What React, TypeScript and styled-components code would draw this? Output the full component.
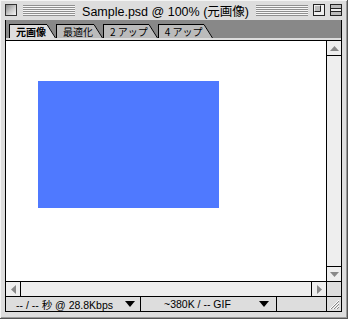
import styled, { createGlobalStyle } from "styled-components"

const GlobalStyle = createGlobalStyle`
  html, body { margin: 0; padding: 0; background: #ffffff; }
  * { box-sizing: border-box; }
`

const tabs = [
    { label: "元画像", active: true },
    { label: "最適化", active: false },
    { label: "2 アップ", active: false },
    { label: "4 アップ", active: false },
]

export default function App() {
    return (
        <>
            <GlobalStyle />
            <Window>
                <TitleBar>
                    <CloseBox />
                    <Stripes />
                    <Title>Sample.psd @ 100% (元画像)</Title>
                    <Stripes />
                    <BoxButton>
                        <svg width="12" height="12" viewBox="0 0 12 12">
                            <rect x="0.5" y="0.5" width="11" height="11" fill="#eee" stroke="#222" />
                            <path d="M1.5 7.5 H7.5 V1.5" fill="none" stroke="#222" />
                            <path d="M2 2 H7 V7 H2 Z" fill="#bbb" />
                        </svg>
                    </BoxButton>
                    <BoxButton>
                        <svg width="12" height="12" viewBox="0 0 12 12">
                            <rect x="0.5" y="0.5" width="11" height="11" fill="#eee" stroke="#222" />
                            <path d="M1 4.5 H11 M1 7.5 H11" stroke="#222" />
                            <rect x="1" y="1" width="10" height="3" fill="#bbb" />
                            <rect x="1" y="8" width="10" height="3" fill="#bbb" />
                        </svg>
                    </BoxButton>
                </TitleBar>
                <Body>
                    <TabBar>
                        {tabs.map((t) => (
                            <Tab key={t.label}>
                                <TabFace $active={t.active}>{t.label}</TabFace>
                                <svg width="9" height="14" viewBox="0 0 9 14">
                                    <path d="M0 0 L9 14 L0 14 Z" fill={t.active ? "#dddddd" : "#bbbbbb"} />
                                    <path d="M0 0.5 L8.5 14" stroke="#000" strokeWidth="1" fill="none" />
                                </svg>
                            </Tab>
                        ))}
                    </TabBar>
                    <Ledge />
                    <Main>
                        <Canvas>
                            <BlueImage />
                        </Canvas>
                        <VScroll>
                            <VArrow $top>
                                <svg width="9" height="5" viewBox="0 0 9 5"><path d="M4.5 0 L9 5 L0 5 Z" fill="#888" /></svg>
                            </VArrow>
                            <VArrow>
                                <svg width="9" height="5" viewBox="0 0 9 5"><path d="M0 0 L9 0 L4.5 5 Z" fill="#888" /></svg>
                            </VArrow>
                        </VScroll>
                        <HScroll>
                            <HArrow $left>
                                <svg width="5" height="9" viewBox="0 0 5 9"><path d="M5 0 L5 9 L0 4.5 Z" fill="#888" /></svg>
                            </HArrow>
                            <HArrow>
                                <svg width="5" height="9" viewBox="0 0 5 9"><path d="M0 0 L0 9 L5 4.5 Z" fill="#888" /></svg>
                            </HArrow>
                        </HScroll>
                        <Corner />
                        <StatusBar>
                            <Popup $width={135} $padLeft={10} $padRight={5}>
                                <span>-- / -- 秒 @ 28.8Kbps</span>
                                <PopArrow />
                            </Popup>
                            <Popup $width={136} $padLeft={23} $padRight={7}>
                                <span>~380K / -- GIF</span>
                                <PopArrow />
                            </Popup>
                        </StatusBar>
                        <GrowBox>
                            <svg width="14" height="14" viewBox="0 0 14 14">
                                <path d="M3 12 L12 3 M6 12 L12 6 M9 12 L12 9" stroke="#fff" strokeWidth="1" />
                                <path d="M4 12 L12 4 M7 12 L12 7 M10 12 L12 10" stroke="#888" strokeWidth="1" />
                            </svg>
                        </GrowBox>
                    </Main>
                </Body>
            </Window>
        </>
    )
}

const Window = styled.div`
    width: 348px;
    height: 319px;
    display: flex;
    flex-direction: column;
    background: #dddddd;
    border-right: 1px solid #555;
    border-bottom: 1px solid #555;
    box-shadow: inset 1px 1px 0 #f4f4f4, inset -1px -1px 0 #999;
    font-family: "Liberation Sans", "Noto Sans CJK JP", sans-serif;
    color: #000;
`
const TitleBar = styled.div`
    height: 20px;
    display: flex;
    align-items: center;
    gap: 4px;
    padding: 0 5px 0 5px;
`
const CloseBox = styled.div`
    width: 12px;
    height: 12px;
    border: 1px solid #333;
    background: linear-gradient(135deg, #888 0%, #ccc 55%, #f4f4f4 100%);
    margin-right: 2px;
`
const Stripes = styled.div`
    flex: 1;
    height: 11px;
    background: repeating-linear-gradient(to bottom, #8f8f8f 0 1px, #f6f6f6 1px 2px);
`
const Title = styled.div`
    font-size: 12.5px;
    padding: 0 3px;
    white-space: nowrap;
    font-family: "Liberation Sans", "Noto Sans CJK JP", sans-serif;
`
const BoxButton = styled.div`
    width: 12px;
    height: 12px;
    display: flex;
    margin-left: 1px;
`
const Body = styled.div`
    flex: 1;
    display: flex;
    flex-direction: column;
    padding: 0 5px 6px 5px;
`
const TabBar = styled.div`
    height: 18px;
    display: flex;
    align-items: flex-end;
    padding-left: 3px;
    background: #888888;
    border-left: 1px solid #000;
    border-right: 1px solid #000;
`
const Tab = styled.div`
    display: flex;
    height: 14px;
`
const TabFace = styled.div<{ $active: boolean }>`
    display: flex;
    align-items: center;
    padding: 0 1px 0 6px;
    background: ${(p) => (p.$active ? "#dddddd" : "#bbbbbb")};
    border-left: 1px solid #000;
    border-top: 1px solid #000;
    font-family: "Noto Sans CJK JP", sans-serif;
    font-size: 10px;
    font-weight: ${(p) => (p.$active ? 700 : 400)};
    white-space: pre;
`
const Ledge = styled.div`
    height: 3px;
    background: #dddddd;
    border-left: 1px solid #000;
    border-right: 1px solid #000;
    border-bottom: 1px solid #000;
`
const Main = styled.div`
    flex: 1;
    display: grid;
    grid-template-columns: 1fr 15px;
    grid-template-rows: 1fr 15px 15px;
    border: 1px solid #000;
    border-top: none;
`
const Canvas = styled.div`
    background: #ffffff;
    padding: 40px 0 0 32px;
    overflow: hidden;
`
const BlueImage = styled.div`
    width: 181px;
    height: 127px;
    background: #4f79ff;
`
const VScroll = styled.div`
    display: flex;
    flex-direction: column;
    justify-content: space-between;
    background: #eeeeee;
    border-left: 1px solid #000;
`
const VArrow = styled.div<{ $top?: boolean }>`
    height: 15px;
    display: flex;
    align-items: center;
    justify-content: center;
    ${(p) => (p.$top ? "border-bottom: 1px solid #000;" : "border-top: 1px solid #000;")}
`
const HScroll = styled.div`
    display: flex;
    justify-content: space-between;
    background: #eeeeee;
    border-top: 1px solid #000;
`
const HArrow = styled.div<{ $left?: boolean }>`
    width: 15px;
    display: flex;
    align-items: center;
    justify-content: center;
    ${(p) => (p.$left ? "border-right: 1px solid #000;" : "border-left: 1px solid #000;")}
`
const Corner = styled.div`
    background: #dddddd;
    border-top: 1px solid #000;
    border-left: 1px solid #000;
`
const StatusBar = styled.div`
    display: flex;
    border-top: 1px solid #000;
    background: #dddddd;
`
const Popup = styled.div<{ $width: number; $padLeft: number; $padRight: number }>`
    width: ${(p) => p.$width}px;
    display: flex;
    align-items: center;
    padding: 0 ${(p) => p.$padRight}px 0 ${(p) => p.$padLeft}px;
    border-right: 1px solid #000;
    font-family: "Liberation Sans", "Noto Sans CJK JP", sans-serif;
    font-size: 10.5px;
    white-space: nowrap;
`
const PopArrow = styled.div`
    margin-left: auto;
    width: 0;
    height: 0;
    border-left: 5px solid transparent;
    border-right: 5px solid transparent;
    border-top: 6px solid #000;
`
const GrowBox = styled.div`
    display: flex;
    align-items: center;
    justify-content: center;
    background: #dddddd;
    border-top: 1px solid #000;
    border-left: 1px solid #000;
`
